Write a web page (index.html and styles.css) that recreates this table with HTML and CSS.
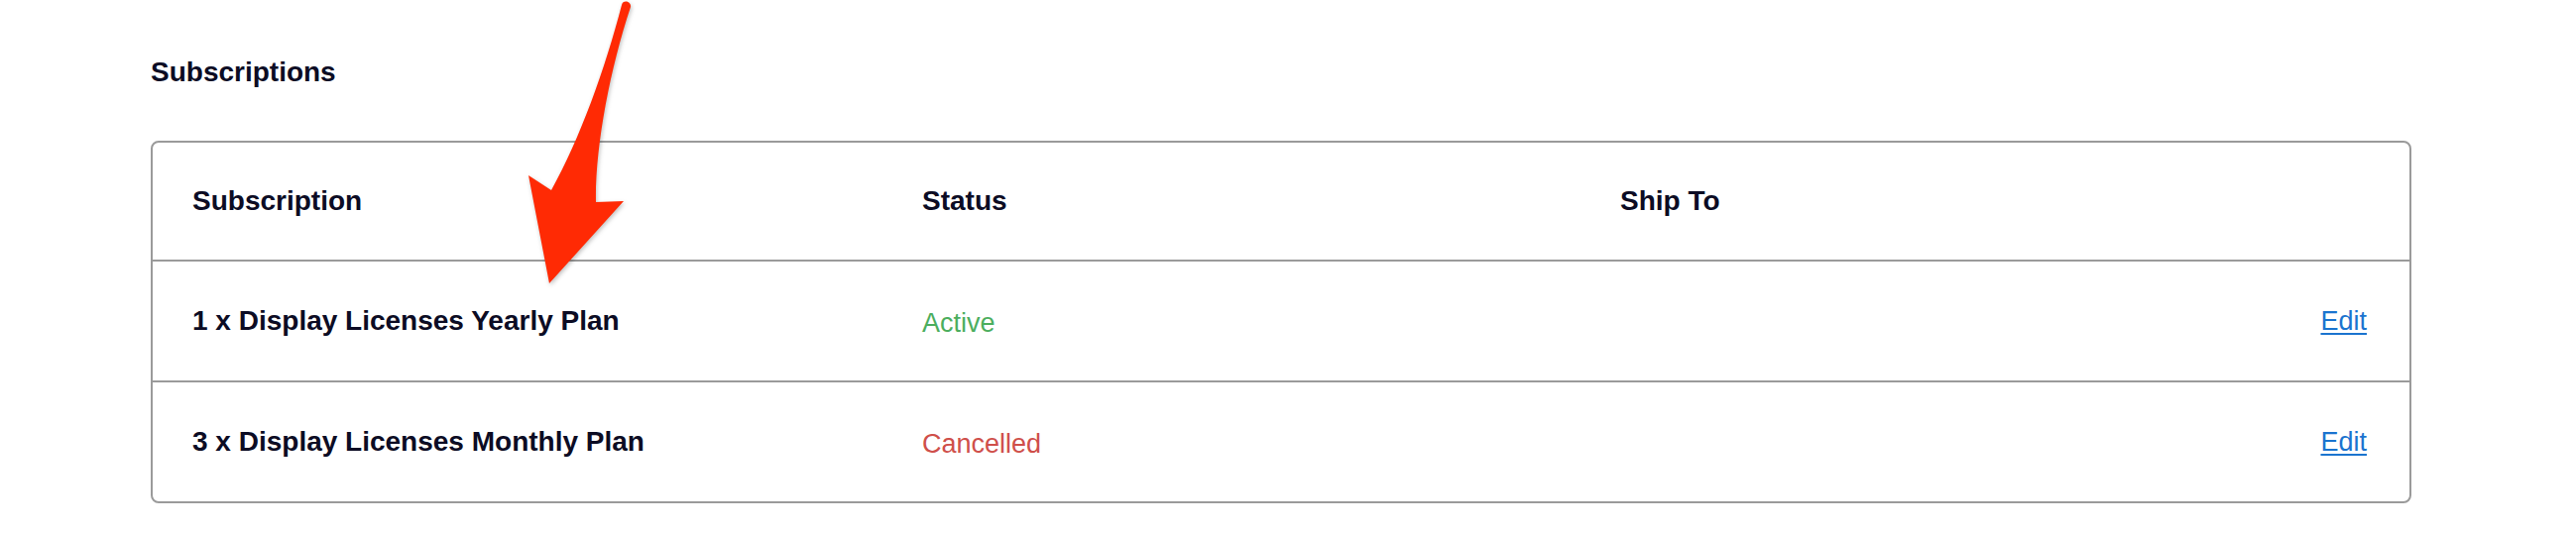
FILE: index.html
```html
<!DOCTYPE html>
<html lang="en">
<head>
<meta charset="utf-8">
<title>Subscriptions</title>
<link rel="stylesheet" href="styles.css">
</head>
<body>
<main class="page">
  <h2 class="title">Subscriptions</h2>
  <div class="table">
    <div class="row head">
      <div class="cell">Subscription</div>
      <div class="cell">Status</div>
      <div class="cell">Ship To</div>
      <div class="cell"></div>
    </div>
    <div class="row">
      <div class="cell name">1 x Display Licenses Yearly Plan</div>
      <div class="cell status active">Active</div>
      <div class="cell"></div>
      <div class="cell"><a class="edit" href="#">Edit</a></div>
    </div>
    <div class="row">
      <div class="cell name">3 x Display Licenses Monthly Plan</div>
      <div class="cell status cancelled">Cancelled</div>
      <div class="cell"></div>
      <div class="cell"><a class="edit" href="#">Edit</a></div>
    </div>
  </div>
</main>
<svg class="annotation" width="2598" height="538" viewBox="0 0 2598 538" aria-hidden="true">
  <path class="arrow" d="M 627 5 C 610 70, 585 140, 556 192 L 533 177 L 554 286 L 629 203 L 601 204 C 600 150, 615 70, 636 7 C 637 1, 628 -1, 627 5 Z"/>
</svg>
</body>
</html>
```

FILE: styles.css
```css
html, body {
  margin: 0;
  padding: 0;
  background: #ffffff;
}

body {
  font-family: "Liberation Sans", Arial, Helvetica, sans-serif;
  color: #0c0c24;
  position: relative;
  width: 2598px;
  height: 538px;
  overflow: hidden;
}

.page {
  display: flex;
  flex-direction: column;
  padding: 57px 166px 0 152px;
}

.title {
  margin: 0;
  font-size: 28px;
  line-height: 32px;
  font-weight: 700;
}

.table {
  margin-top: 53px;
  border: 2px solid #9a9a9a;
  border-radius: 8px;
  display: flex;
  flex-direction: column;
}

.row {
  display: grid;
  grid-template-columns: 736px 704px 1fr auto;
  align-items: center;
  height: 120px;
  padding: 0 43px 0 40px;
  border-top: 2px solid #9a9a9a;
}

.row.head {
  border-top: none;
  height: 118px;
}

.cell {
  font-size: 28px;
  line-height: 32px;
}

.head .cell,
.cell.name {
  font-weight: 700;
}

.status {
  font-size: 27px;
  padding-top: 3px;
}

.active {
  color: #4cae5e;
}

.cancelled {
  color: #cf4f4a;
}

.edit {
  font-size: 27px;
  color: #1b74cf;
  text-decoration: underline;
  text-decoration-thickness: 2px;
  text-underline-offset: 3px;
}

.annotation {
  position: absolute;
  top: 0;
  left: 0;
  pointer-events: none;
}

.arrow {
  fill: #ff2a04;
  filter: drop-shadow(1px 2px 2px rgba(0, 0, 0, 0.25));
}
```
